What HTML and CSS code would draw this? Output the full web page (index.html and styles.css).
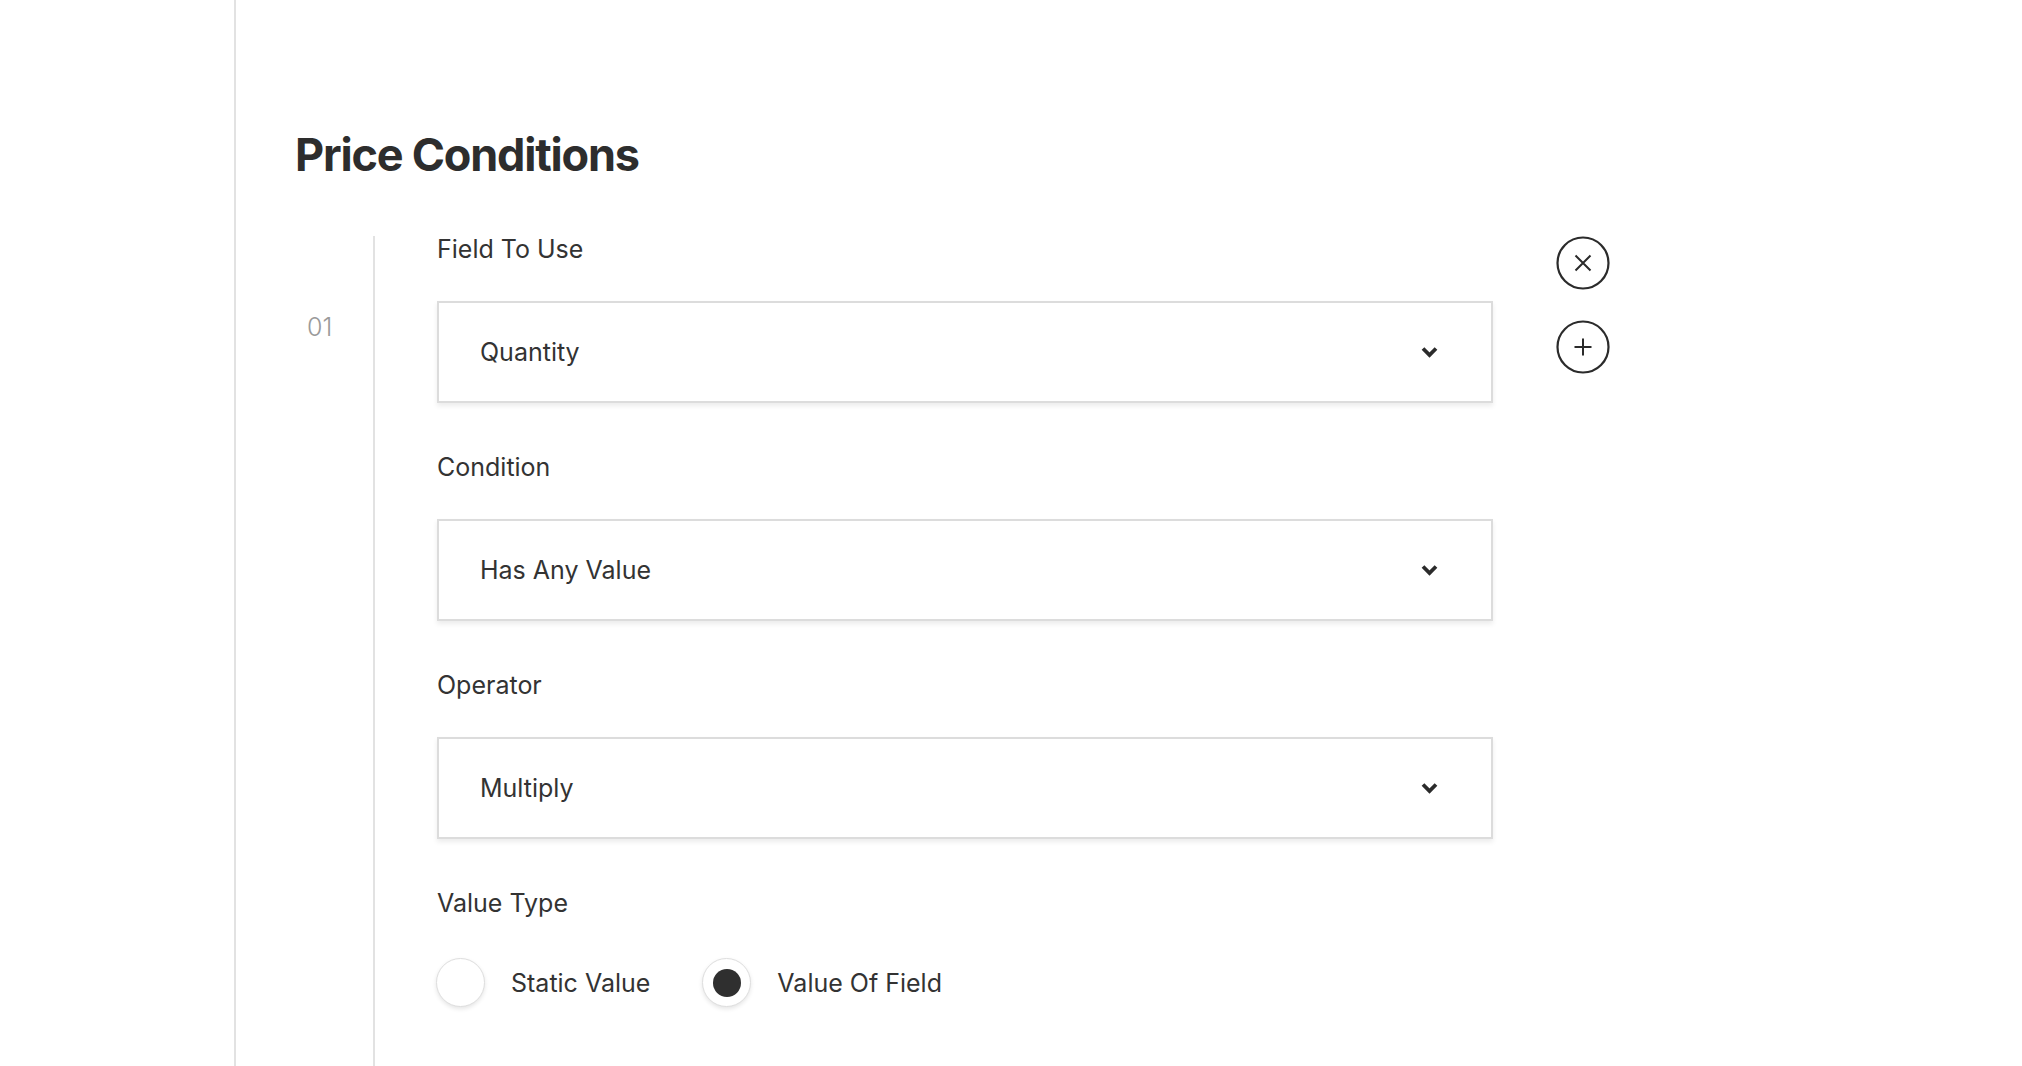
FILE: index.html
```html
<!DOCTYPE html>
<html lang="en">
<head>
<meta charset="utf-8">
<title>Price Conditions</title>
<link rel="stylesheet" href="styles.css">
</head>
<body>
<div class="page">
  <aside class="sidebar"></aside>
  <main class="main">
    <h1 class="title">Price Conditions</h1>
    <section class="condition-row">
      <div class="row-number">01</div>
      <div class="fields">
        <div class="field">
          <div class="field-label">Field To Use</div>
          <div class="select">
            <span class="select-value">Quantity</span>
            <svg class="chevron" width="17" height="12" viewBox="0 0 17 12"><polyline points="2,2.5 8.5,9 15,2.5" fill="none" stroke="#2b2b2b" stroke-width="3.8" stroke-linecap="butt" stroke-linejoin="miter"/></svg>
          </div>
        </div>
        <div class="field">
          <div class="field-label">Condition</div>
          <div class="select">
            <span class="select-value">Has Any Value</span>
            <svg class="chevron" width="17" height="12" viewBox="0 0 17 12"><polyline points="2,2.5 8.5,9 15,2.5" fill="none" stroke="#2b2b2b" stroke-width="3.8" stroke-linecap="butt" stroke-linejoin="miter"/></svg>
          </div>
        </div>
        <div class="field">
          <div class="field-label">Operator</div>
          <div class="select">
            <span class="select-value">Multiply</span>
            <svg class="chevron" width="17" height="12" viewBox="0 0 17 12"><polyline points="2,2.5 8.5,9 15,2.5" fill="none" stroke="#2b2b2b" stroke-width="3.8" stroke-linecap="butt" stroke-linejoin="miter"/></svg>
          </div>
        </div>
        <div class="field field-last">
          <div class="field-label">Value Type</div>
          <div class="radio-group">
            <label class="radio">
              <span class="radio-circle"></span>
              <span class="radio-text">Static Value</span>
            </label>
            <label class="radio">
              <span class="radio-circle is-checked"><span class="radio-dot"></span></span>
              <span class="radio-text">Value Of Field</span>
            </label>
          </div>
        </div>
      </div>
      <div class="row-actions">
        <button class="circle-btn" type="button" aria-label="Remove">
          <svg width="54" height="54" viewBox="0 0 54 54"><circle cx="27" cy="27" r="25.5" fill="none" stroke="#2b2b2b" stroke-width="2.2"/><path d="M19.5 19.5 L34.5 34.5 M34.5 19.5 L19.5 34.5" stroke="#2b2b2b" stroke-width="2" fill="none"/></svg>
        </button>
        <button class="circle-btn" type="button" aria-label="Add">
          <svg width="54" height="54" viewBox="0 0 54 54"><circle cx="27" cy="27" r="25.5" fill="none" stroke="#2b2b2b" stroke-width="2.2"/><path d="M27 18.5 V35.5 M18.5 27 H35.5" stroke="#2b2b2b" stroke-width="2" fill="none"/></svg>
        </button>
      </div>
    </section>
  </main>
</div>
</body>
</html>
```

FILE: styles.css
```css
* { box-sizing: border-box; }

html, body {
  margin: 0;
  padding: 0;
  height: 100%;
  background: #ffffff;
}

body {
  font-family: Inter, "Noto Sans", "Liberation Sans", sans-serif;
  color: #2f2f2f;
  overflow: hidden;
}

.page {
  display: flex;
  height: 1066px;
}

.sidebar {
  width: 236px;
  flex: 0 0 236px;
  border-right: 2px solid #e2e2e2;
}

.main {
  flex: 1;
  display: flex;
  flex-direction: column;
  padding: 128px 0 0 59px;
}

.title {
  margin: 0 0 54px 0;
  font-size: 45px;
  line-height: 54px;
  font-weight: 700;
  letter-spacing: -1.2px;
  color: #2d2d2d;
}

.condition-row {
  flex: 1;
  display: flex;
  align-items: flex-start;
}

.row-number {
  width: 78px;
  flex: 0 0 78px;
  padding: 76px 0 0 12px;
  font-size: 25px;
  line-height: 30px;
  font-weight: 300;
  color: #9a9a9a;
}

.fields {
  width: 1120px;
  flex: 0 0 1120px;
  align-self: stretch;
  border-left: 2px solid #e2e2e2;
  padding-left: 62px;
}

.field {
  margin-bottom: 51px;
}

.field-label {
  font-size: 25px;
  line-height: 26px;
  color: #333;
  margin-bottom: 39px;
}

.select {
  width: 1056px;
  height: 102px;
  border: 2px solid #dcdcdc;
  box-shadow: 0 3px 5px rgba(0, 0, 0, 0.08);
  background: #fff;
  display: flex;
  align-items: center;
  justify-content: space-between;
  padding: 0 53px 0 41px;
}

.select-value {
  font-size: 25px;
  line-height: 30px;
  color: #333;
}

.chevron {
  display: block;
}

.radio-group {
  display: flex;
  align-items: center;
  margin-left: -1px;
}

.field-last {
  margin-bottom: 0;
}

.field-last .field-label {
  margin-bottom: 42px;
}

.radio {
  display: flex;
  align-items: center;
  margin-right: 52px;
}

.radio-circle {
  width: 49px;
  height: 49px;
  border-radius: 50%;
  border: 1px solid #dedede;
  box-shadow: 0 2px 4px rgba(0, 0, 0, 0.1);
  background: #fff;
  display: flex;
  align-items: center;
  justify-content: center;
  margin-right: 26px;
}

.radio-dot {
  width: 28px;
  height: 28px;
  border-radius: 50%;
  background: #2f2f2f;
}

.radio-text {
  font-size: 25px;
  line-height: 30px;
  color: #333;
}

.row-actions {
  margin-left: 63px;
  display: flex;
  flex-direction: column;
  gap: 30px;
}

.circle-btn {
  width: 54px;
  height: 54px;
  padding: 0;
  border: 0;
  background: transparent;
  display: block;
}

.circle-btn svg {
  display: block;
}
```
